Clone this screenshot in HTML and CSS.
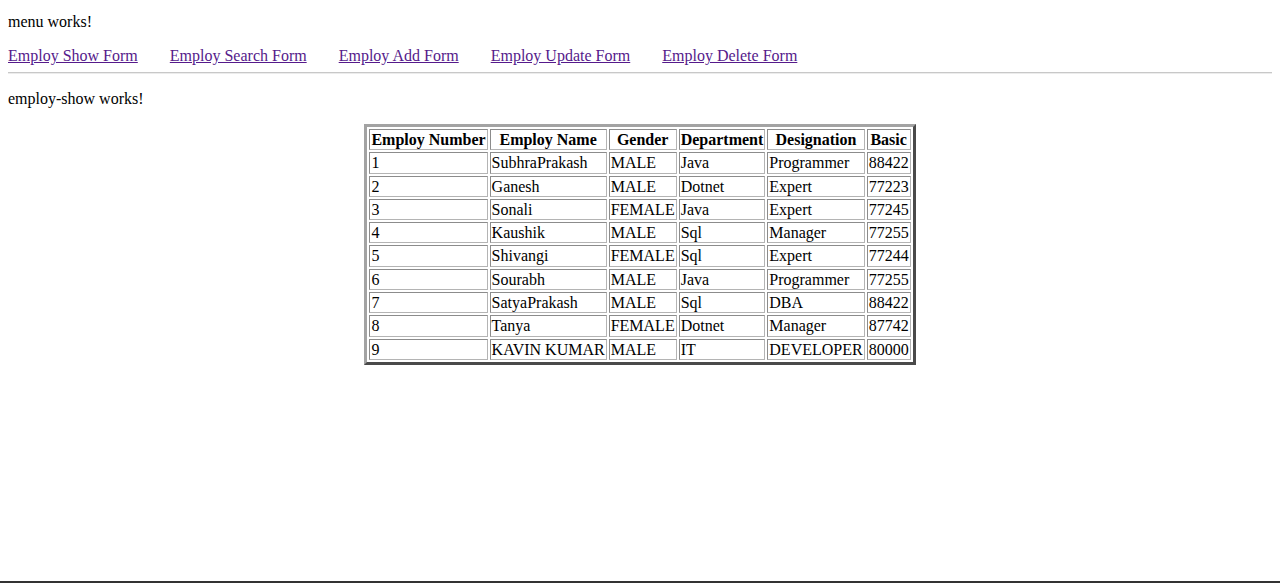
FILE: index.html
```html
<!DOCTYPE html>
<html lang="en">
<head>
<meta charset="utf-8">
<title>Employ</title>
<link rel="stylesheet" href="styles.css">
</head>
<body>
<p class="menu-title">menu works!</p>
<nav class="menu-links">
  <a href="#show">Employ Show Form</a>
  <a href="#search">Employ Search Form</a>
  <a href="#add">Employ Add Form</a>
  <a href="#update">Employ Update Form</a>
  <a href="#delete">Employ Delete Form</a>
</nav>
<hr class="menu-rule">
<p class="show-title">employ-show works!</p>
<table class="emp-table">
  <thead>
    <tr><th>Employ Number</th><th>Employ Name</th><th>Gender</th><th>Department</th><th>Designation</th><th>Basic</th></tr>
  </thead>
  <tbody>
    <tr><td>1</td><td>SubhraPrakash</td><td>MALE</td><td>Java</td><td>Programmer</td><td>88422</td></tr>
    <tr><td>2</td><td>Ganesh</td><td>MALE</td><td>Dotnet</td><td>Expert</td><td>77223</td></tr>
    <tr><td>3</td><td>Sonali</td><td>FEMALE</td><td>Java</td><td>Expert</td><td>77245</td></tr>
    <tr><td>4</td><td>Kaushik</td><td>MALE</td><td>Sql</td><td>Manager</td><td>77255</td></tr>
    <tr><td>5</td><td>Shivangi</td><td>FEMALE</td><td>Sql</td><td>Expert</td><td>77244</td></tr>
    <tr><td>6</td><td>Sourabh</td><td>MALE</td><td>Java</td><td>Programmer</td><td>77255</td></tr>
    <tr><td>7</td><td>SatyaPrakash</td><td>MALE</td><td>Sql</td><td>DBA</td><td>88422</td></tr>
    <tr><td>8</td><td>Tanya</td><td>FEMALE</td><td>Dotnet</td><td>Manager</td><td>87742</td></tr>
    <tr><td>9</td><td>KAVIN KUMAR</td><td>MALE</td><td>IT</td><td>DEVELOPER</td><td>80000</td></tr>
  </tbody>
</table>
</body>
</html>
```
FILE: styles.css
```css
html {
  min-height: 100%;
  box-sizing: border-box;
  border-bottom: 2px solid #333;
  background: #fff;
}
body {
  margin: 0 8px 8px;
  font-family: "Liberation Serif", "Times New Roman", serif;
  font-size: 16px;
  color: #000;
}
.menu-title {
  margin: 13px 0 16px;
}
.menu-links {
  display: flex;
  gap: 32px;
}
.menu-links a {
  color: #551a8b;
  text-decoration: underline;
}
.menu-rule {
  margin: 7px 0 8px;
  border: 0;
  border-top: 1px solid #c8c8c8;
  border-bottom: 1px solid #ececec;
  height: 0;
}
.show-title {
  margin: 16px 0;
}
.emp-table {
  margin: 0 auto;
  border: 3px solid;
  border-color: #a3a3a3 #4a4a4a #4a4a4a #a3a3a3;
  border-spacing: 2px;
}
.emp-table th,
.emp-table td {
  border: 1px solid;
  border-color: #8c8c8c #b4b4b4 #b4b4b4 #8c8c8c;
  padding: 1px;
  line-height: 17.3px;
}
.emp-table th {
  font-weight: bold;
  text-align: center;
}
.emp-table td {
  text-align: left;
}
```
